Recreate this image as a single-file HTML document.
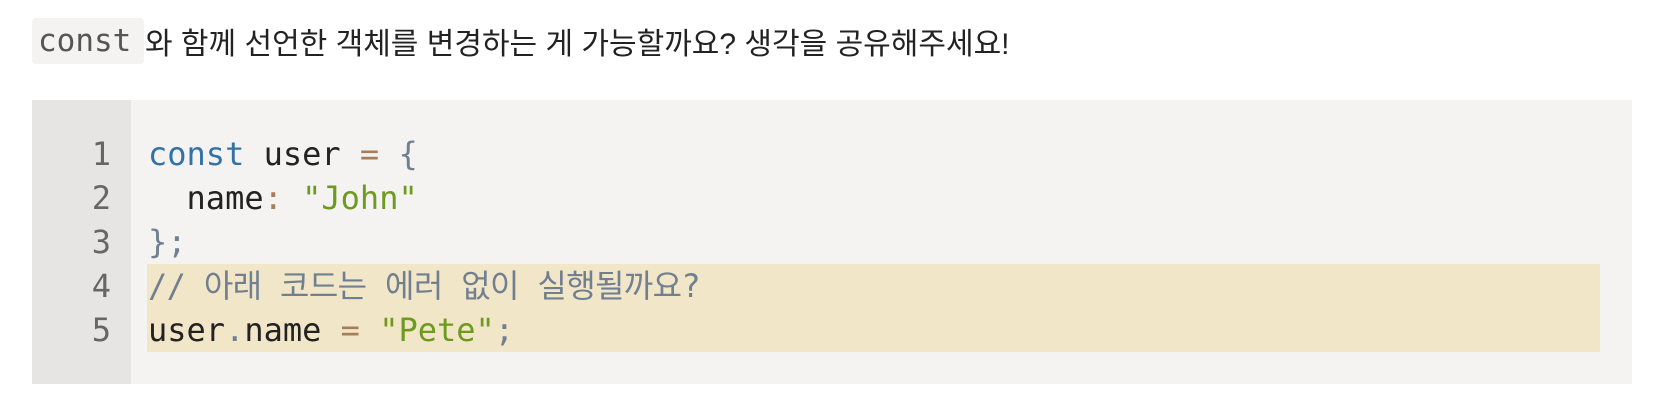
<!DOCTYPE html>
<html><head><meta charset="utf-8"><style>
body{margin:0;background:#fff;width:1662px;height:408px;overflow:hidden;position:relative;font-family:"Liberation Sans","Noto Sans CJK KR",sans-serif;}
.p{position:absolute;left:32px;top:18px;height:46px;font-size:30px;color:#222;display:flex;align-items:center;white-space:nowrap}
.ic{background:#f4f3f1;border-radius:4px;font-family:"DejaVu Sans Mono","Noto Sans CJK KR",monospace;color:#555;font-size:31px;height:46px;line-height:46px;padding:0 6px;width:112px;margin-right:1px;box-sizing:border-box}
.blk{position:absolute;left:32px;top:100px;width:1600px;height:284px;background:#f4f3f1}
.gut{position:absolute;left:0;top:0;width:99px;height:284px;background:#e6e5e4}
.hl{position:absolute;left:115px;top:164px;width:1453px;height:88px;background:#f2e6c9}
.ln,.code{position:absolute;top:32px;font-family:"DejaVu Sans Mono","Noto Sans CJK KR",monospace;font-size:32px;line-height:44px;white-space:pre}
.ln{left:0;width:79px;text-align:right;color:#666}
.code{left:116px;color:#222}
.k{color:#3272a6}.s{color:#6d9a1f}.o{color:#a67f59}.pu{color:#708090}.c{color:#708090;letter-spacing:-0.65px}
</style></head><body>
<div class="p"><span class="ic">const</span>와 함께 선언한 객체를 변경하는 게 가능할까요? 생각을 공유해주세요!</div>
<div class="blk"><div class="gut"></div><div class="hl"></div>
<div class="ln">1
2
3
4
5</div>
<div class="code"><span class="k">const</span> user <span class="o">=</span> <span class="pu">{</span>
  name<span class="o">:</span> <span class="s">"John"</span>
<span class="pu">};</span>
<span class="c">// 아래 코드는 에러 없이 실행될까요?</span>
user<span class="pu">.</span>name <span class="o">=</span> <span class="s">"Pete"</span><span class="pu">;</span></div>
</div>
</body></html>
